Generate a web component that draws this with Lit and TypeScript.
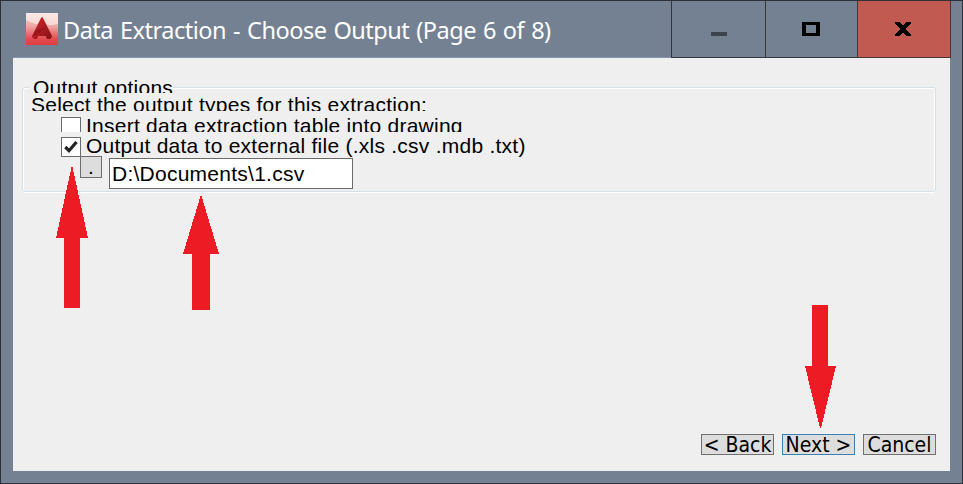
import { LitElement, html, css, svg } from "lit";
import { customElement, property } from "lit/decorators.js";

@customElement("caption-button")
class CaptionButton extends LitElement {
  @property() kind = "min";
  static styles = css`
    :host { display: block; box-sizing: border-box; height: 57px; border-left: 1px solid #35353c; border-bottom: 1px solid #35353c; }
    :host([kind="min"]) { width: 94px; }
    :host([kind="max"]) { width: 92px; }
    :host([kind="close"]) { width: 94px; background: #c15a50; border-right: 1px solid #4c3a40; border-color: #4c3539; }
    svg { display: block; width: 92px; height: 56px; }
  `;
  render() {
    const glyphs: Record<string, unknown> = {
      min: svg`<rect x="39" y="31" width="16" height="4" fill="#3d424b"/>`,
      max: svg`<path fill-rule="evenodd" d="M36 21h18v14h-18zM40 24v8h10v-8z"/>`,
      close: svg`<path d="M37 21h5l3 4 3-4h5v1l-5.500 6 5.500 6v1h-5l-3-4-3 4h-5v-1l5.500-6-5.500-6z"/>`,
    };
    return html`<svg viewBox="0 0 92 56" shape-rendering="crispEdges">${glyphs[this.kind]}</svg>`;
  }
}

@customElement("check-row")
class CheckRow extends LitElement {
  @property({ type: Boolean }) checked = false;
  @property() label = "";
  static styles = css`
    :host { display: flex; overflow: hidden; }
    .box { box-sizing: border-box; flex: none; width: 20px; height: 20px; border: 1px solid #6b6b6b; background: #fff; }
    svg { display: block; width: 18px; height: 18px; }
    .label { margin: -3px 0 0 5px; line-height: 23px; white-space: pre; }
  `;
  render() {
    return html`<span class="box">${this.checked
      ? html`<svg viewBox="0 0 18 18"><path d="M3.300 9L7 12.700 14.500 4" fill="none" stroke="#222" stroke-width="3.200"/></svg>` : ""}</span>
      <span class="label">${this.label}</span>`;
  }
}

@customElement("app-root")
class AppRoot extends LitElement {
  static styles = css`
    :host { display: block; width: 963px; height: 484px; position: relative; overflow: hidden; }
    .window { box-sizing: border-box; width: 963px; height: 484px; border: 1px solid #2f2f35; background: #748192; display: flex; flex-direction: column; }
    .title { display: flex; height: 57px; flex: none; }
    .caption { box-sizing: border-box; width: 658px; margin-left: 12px; border-bottom: 1px solid #8496ab; display: flex; padding: 12px 0 0 13px; }
    .logo { display: block; width: 32px; height: 32px; flex: none; }
    .name { margin-left: 5px; color: #fff; font: 23.500px/34px "Noto Sans", sans-serif; letter-spacing: -.5px; word-spacing: 1.400px; white-space: pre; }
    .client { box-sizing: border-box; width: 937px; height: 413px; margin-left: 12px; background: #efefef; display: flex; flex-direction: column; justify-content: space-between; padding: 23px 14px 16px 9px; font: 21px/23px "Liberation Sans", Arial, sans-serif; letter-spacing: .25px; color: #000; }
    .group { display: grid; grid-template-rows: 6px 105px; }
    .frame { grid-area: 2 / 1; box-sizing: border-box; border: 1px solid #d5dfe5; border-radius: 3px; box-shadow: inset 1px 1px #fff, 0 1px #fff, inset -1px 0 #fff; }
    .content { grid-area: 1 / 1 / 3 / 2; display: flex; flex-direction: column; align-items: flex-start; z-index: 1; }
    .legend { height: 13px; overflow: hidden; background: #efefef; margin: -1px 0 0 7px; padding: 0 0 0 4px; line-height: 16px; white-space: pre; }
    .prompt { height: 14px; overflow: hidden; margin: 4px 0 0 9px; line-height: 16px; white-space: pre; }
    .insert { height: 15px; margin: 6px 0 0 39px; }
    .output { height: 23px; margin: 5px 0 0 39px; }
    .path { display: flex; margin: -4px 0 0 58px; }
    .browse { box-sizing: border-box; width: 22px; height: 22px; border: 1px solid #6d6d6d; background: #ddd; text-align: center; line-height: 19px; }
    .field { box-sizing: border-box; width: 244px; height: 31px; margin: 2px 0 0 7px; border: 1px solid #6b6b6b; background: #fff; padding-left: 2px; line-height: 30px; }
    .footer { display: flex; justify-content: flex-end; gap: 8px; }
    .btn { box-sizing: border-box; width: 73px; height: 21px; border: 1px solid #707070; background: #ddd; display: flex; justify-content: center; font: 21px/21px "DejaVu Sans Condensed", "DejaVu Sans", sans-serif; font-stretch: condensed; letter-spacing: 0; white-space: pre; }
    .next { border-color: #3c7fb1; }
    .arrows { position: absolute; left: 0; top: 0; width: 963px; height: 484px; pointer-events: none; z-index: 2; }
  `;
  render() {
    return html`
      <div class="window">
        <div class="title">
          <div class="caption">
            <svg class="logo" viewBox="0 0 32 32">
              <defs>
                <linearGradient id="bg" x2="0" y2="1"><stop offset="0" stop-color="#f7d4cf"/><stop offset=".4" stop-color="#efaaa7"/><stop offset=".8" stop-color="#e34d50"/><stop offset="1" stop-color="#e03c41"/></linearGradient>
                <linearGradient id="a" x2="1" y2="1"><stop offset="0" stop-color="#d3272c"/><stop offset="1" stop-color="#861116"/></linearGradient>
              </defs>
              <path fill="url(#bg)" d="M0 0h32v32H0z"/>
              <path fill="#fff" opacity=".5" d="M0 0h32v11Q14 15 0 7z"/>
              <path fill="url(#a)" d="M16 4l1 1 9 18v1l-2 2h-3l-1-3h-8l-1 3H8l-2-2v-1l9-18z"/>
              <path fill="#8c1318" d="M9 18l11-4-7 6-6 3zM20 23h5l-3 3h-1z" opacity=".7"/>
            </svg>
            <span class="name">Data Extraction - Choose Output (Page 6 of 8)</span>
          </div>
          <caption-button kind="min"></caption-button>
          <caption-button kind="max"></caption-button>
          <caption-button kind="close"></caption-button>
        </div>
        <div class="client">
          <div class="group">
            <div class="frame"></div>
            <div class="content">
              <div class="legend">Output options</div>
              <div class="prompt">Select the output types for this extraction:</div>
              <check-row class="insert" label="Insert data extraction table into drawing"></check-row>
              <check-row class="output" checked label="Output data to external file (.xls .csv .mdb .txt)"></check-row>
              <div class="path"><div class="browse">.</div><div class="field">D:\\Documents\\1.csv</div></div>
            </div>
          </div>
          <div class="footer">
            <div class="btn">&lt; Back</div><div class="btn next">Next &gt;</div><div class="btn">Cancel</div>
          </div>
        </div>
      </div>
      <svg class="arrows" viewBox="0 0 963 484" fill="#ed1c24" shape-rendering="crispEdges">
        <path d="M71.500 167h1L88 238h-8v70H64v-70h-8z"/>
        <path d="M200.500 196h1L219 254h-9v56h-18v-56h-9z"/>
        <path d="M812 305h16v61h8l-15 62h-1l-15-62h7z"/>
      </svg>`;
  }
}
